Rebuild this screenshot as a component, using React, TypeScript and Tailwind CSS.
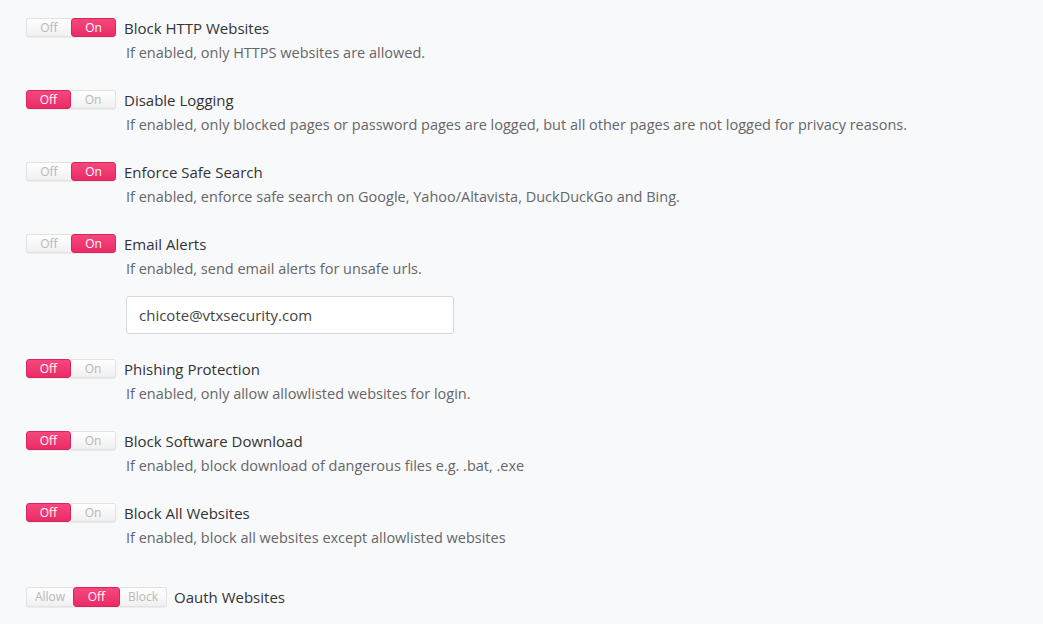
import React from "react";

const font = { fontFamily: '"Open Sans", "Noto Sans", sans-serif' };

function Seg({ label, active, pos, wide }: { label: string; active: boolean; pos: "l" | "m" | "r"; wide?: boolean }) {
  const round = pos === "l" ? "rounded-l-[3px]" : pos === "r" ? "rounded-r-[3px]" : "";
  const size = wide ? "w-[47px] h-[20px]" : "w-[45px] h-[19px]";
  if (active) {
    return (
      <div
        className={`${size} flex items-center justify-center text-[12px] leading-none text-white bg-gradient-to-b from-[#f6477c] to-[#ea2a67] border border-[#d8255e] rounded-[3px]`}
      >
        {label}
      </div>
    );
  }
  return (
    <div
      className={`${size} flex items-center justify-center text-[12px] leading-none text-[#b8b8b8] bg-gradient-to-b from-[#ffffff] to-[#f0f0f0] border-y border-[#e2e2e2] ${pos === "l" ? "border-l" : ""} ${pos === "r" ? "border-r" : ""} ${round}`}
    >
      {label}
    </div>
  );
}

function Toggle({ on }: { on: boolean }) {
  return (
    <div className="flex w-[90px] shrink-0 shadow-[0_1px_1px_rgba(0,0,0,0.06)] rounded-[3px]">
      <Seg label="Off" active={!on} pos="l" />
      <Seg label="On" active={on} pos="r" />
    </div>
  );
}

function Row({ on, title, desc, children }: { on: boolean; title: string; desc: string; children?: React.ReactNode }) {
  return (
    <div className="flex">
      <div className="pt-[7px]">
        <Toggle on={on} />
      </div>
      <div className="ml-[8px]">
        <div className="text-[15px] leading-[24px] text-[#333] pt-[5px]">{title}</div>
        <div className="text-[14.5px] leading-[24px] text-[#666] ml-[2px] mt-[1px]">{desc}</div>
        {children}
      </div>
    </div>
  );
}

export default function App() {
  return (
    <div className="w-[1043px] h-[624px] bg-[#f8f9fb] pl-[26px] pt-[11px] overflow-hidden" style={font}>
      <div className="flex flex-col gap-[18px]">
        <Row on title="Block HTTP Websites" desc="If enabled, only HTTPS websites are allowed." />
        <Row on={false} title="Disable Logging" desc="If enabled, only blocked pages or password pages are logged, but all other pages are not logged for privacy reasons." />
        <Row on title="Enforce Safe Search" desc="If enabled, enforce safe search on Google, Yahoo/Altavista, DuckDuckGo and Bing." />
        <Row on title="Email Alerts" desc="If enabled, send email alerts for unsafe urls.">
          <div className="mt-[15px] ml-[2px] w-[328px] h-[38px] bg-white border border-[#d4d7db] rounded-[3px] flex items-center px-[12px] text-[15px] text-[#444]">
            chicote@vtxsecurity.com
          </div>
        </Row>
        <Row on={false} title="Phishing Protection" desc="If enabled, only allow allowlisted websites for login." />
        <Row on={false} title="Block Software Download" desc="If enabled, block download of dangerous files e.g. .bat, .exe" />
        <Row on={false} title="Block All Websites" desc="If enabled, block all websites except allowlisted websites" />
      </div>
      <div className="flex items-center mt-[36px]">
        <div className="flex w-[141px] shadow-[0_1px_1px_rgba(0,0,0,0.06)] rounded-[3px]">
          <Seg label="Allow" active={false} pos="l" wide />
          <Seg label="Off" active pos="m" wide />
          <Seg label="Block" active={false} pos="r" wide />
        </div>
        <div className="ml-[7px] text-[15px] text-[#333]">Oauth Websites</div>
      </div>
    </div>
  );
}
